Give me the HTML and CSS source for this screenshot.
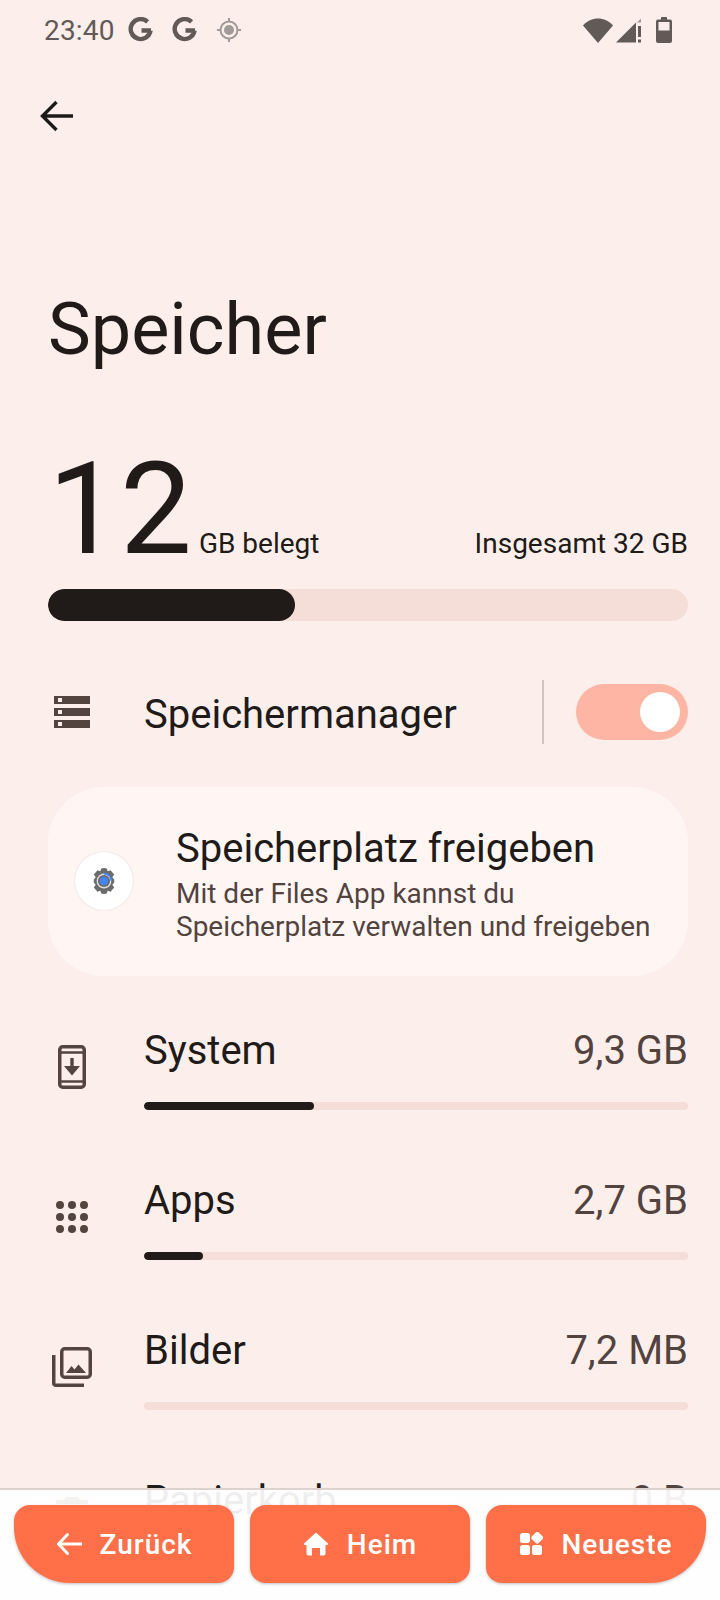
FILE: index.html
```html
<!DOCTYPE html>
<html lang="de">
<head>
    <meta charset="UTF-8">
    <title>Speicher</title>
    <link rel="stylesheet" href="styles.css">
</head>
<body>
    <div class="screen">
        <div class="statusbar">
            <span class="clock">23:40</span>
            <svg class="g-icon" viewBox="0 0 26 26"><path d="M23 13.5h-9.5M22.6 13.5a10 10 0 1 1-3-8.7" fill="none" stroke="#625a57" stroke-width="4.4"/></svg>
            <svg class="g-icon g-second" viewBox="0 0 26 26"><path d="M23 13.5h-9.5M22.6 13.5a10 10 0 1 1-3-8.7" fill="none" stroke="#625a57" stroke-width="4.4"/></svg>
            <svg class="gps-icon" viewBox="0 0 24 24">
                <circle cx="12" cy="12" r="8.5" fill="none" stroke="#a09a98" stroke-width="2"/>
                <circle cx="12" cy="12" r="5" fill="#a09a98"/>
                <path d="M12 0v4M12 20v4M0 12h4M20 12h4" stroke="#a09a98" stroke-width="2"/>
            </svg>
            <span class="status-right">
                <svg class="wifi-icon" viewBox="0 0 30 26"><path d="M0 8.5C8-.8 22-.8 30 8.500L15 26z" fill="#625a57"/></svg>
                <svg class="signal-icon" viewBox="0 0 26 26">
                    <path d="M0 25.500L20 5.500V25.500z" fill="#625a57"/>
                    <path d="M21 5.500L25 1.500V5.500z" fill="#a09a98"/>
                    <path d="M22 9h3v11h-3zM22 22.500h3v3h-3z" fill="#625a57"/>
                </svg>
                <svg class="battery-icon" viewBox="0 0 16 26">
                    <path d="M5 0h6v2.500h3a2 2 0 0 1 2 2V24a2 2 0 0 1-2 2H2a2 2 0 0 1-2-2V4.500a2 2 0 0 1 2-2h3z" fill="#625a57"/>
                    <rect x="2.500" y="5" width="11" height="8.500" fill="#fcefeb"/>
                </svg>
            </span>
        </div>

        <div class="toolbar">
            <svg class="back-icon" viewBox="0 0 34 32"><path d="M33 16H3M16.500 2L2.500 16l14 14" fill="none" stroke="#1c1a19" stroke-width="3.400"/></svg>
        </div>

        <h1 class="title">Speicher</h1>

        <div class="usage">
            <span class="usage-num">12</span>
            <span class="usage-unit">GB belegt</span>
            <span class="usage-total">Insgesamt 32 GB</span>
        </div>
        <div class="bar-main"><div class="bar-main-fill"></div></div>

        <div class="manager">
            <span class="row-icon">
                <svg class="icon-manager" viewBox="0 0 36 32">
                    <path fill-rule="evenodd" d="M0 0h36v8H0zM4 2v4h4V2zM0 12h36v8H0zM4 14v4h4v-4zM0 24h36v8H0zM4 26v4h4v-4z" fill="#54443f"/>
                </svg>
            </span>
            <span class="manager-label">Speichermanager</span>
            <span class="divider"></span>
            <span class="switch"><span class="switch-thumb"></span></span>
        </div>

        <div class="card">
            <span class="card-logo">
                <svg class="icon-files" viewBox="0 0 28 28">
                    <path d="M14 0l3 .5 1 3 3-1 4 4.500-2 3 2 2.500v3l-2 2.500 2 3-4 4.500-3-1-1 3-3 .5-3-.5-1-3-3 1-4-4.500 2-3-2-2.500v-3l2-2.500-2-3 4-4.500 3 1 1-3z" fill="#6c6c6c"/>
                    <circle cx="14" cy="14" r="8" fill="#dcdcdc"/>
                    <circle cx="14" cy="14" r="6.500" fill="#6c6c6c"/>
                    <circle cx="14" cy="14" r="4.500" fill="#4285f4"/>
                    <path d="M14 6a8 8 0 0 1 8 8" fill="none" stroke="#4285f4" stroke-width="1.800"/>
                </svg>
            </span>
            <div class="card-text">
                <div class="card-title">Speicherplatz freigeben</div>
                <div class="card-sub">Mit der Files App kannst du<br>Speicherplatz verwalten und freigeben</div>
            </div>
        </div>

        <div class="cats">
            <div class="cat">
                <span class="row-icon">
                    <svg class="icon-system" viewBox="0 0 28 44">
                        <rect x="1.750" y="1.750" width="24.500" height="40.500" rx="3" fill="none" stroke="#54443f" stroke-width="3.500"/>
                        <path d="M2 7.500h24M2 36.500h24" stroke="#54443f" stroke-width="2.500"/>
                        <path d="M12.300 13h3.400v8H22l-8 9.500-8-9.500h6.300z" fill="#54443f"/>
                    </svg>
                </span>
                <div class="cat-body">
                    <div class="cat-head"><span>System</span><span class="cat-size">9,3 GB</span></div>
                    <div class="cat-track"><div class="cat-fill fill-system"></div></div>
                </div>
            </div>
            <div class="cat">
                <span class="row-icon">
                    <svg class="icon-apps" viewBox="0 0 32 32" fill="#54443f">
                        <circle cx="4" cy="4" r="4"/><circle cx="16" cy="4" r="4"/><circle cx="28" cy="4" r="4"/>
                        <circle cx="4" cy="16" r="4"/><circle cx="16" cy="16" r="4"/><circle cx="28" cy="16" r="4"/>
                        <circle cx="4" cy="28" r="4"/><circle cx="16" cy="28" r="4"/><circle cx="28" cy="28" r="4"/>
                    </svg>
                </span>
                <div class="cat-body">
                    <div class="cat-head"><span>Apps</span><span class="cat-size">2,7 GB</span></div>
                    <div class="cat-track"><div class="cat-fill fill-apps"></div></div>
                </div>
            </div>
            <div class="cat">
                <span class="row-icon">
                    <svg class="icon-images" viewBox="0 0 40 40">
                        <rect x="9.750" y="1.750" width="28.500" height="28.500" rx="3" fill="none" stroke="#54443f" stroke-width="3.500"/>
                        <path d="M1.750 8v28a2.250 2.250 0 0 0 2.250 2.250h28" fill="none" stroke="#54443f" stroke-width="3.500"/>
                        <path d="M14 26l5.500-7 3 3.500 4-5L34 26z" fill="#54443f"/>
                    </svg>
                </span>
                <div class="cat-body">
                    <div class="cat-head"><span>Bilder</span><span class="cat-size">7,2 MB</span></div>
                    <div class="cat-track"></div>
                </div>
            </div>
            <div class="cat">
                <span class="row-icon">
                    <svg class="icon-trash" viewBox="0 0 32 40">
                        <path d="M10 0h12l2 3h8v4H0V3h8zM3 9h26v27a4 4 0 0 1-4 4H7a4 4 0 0 1-4-4z" fill="#54443f"/>
                    </svg>
                </span>
                <div class="cat-body">
                    <div class="cat-head"><span>Papierkorb</span><span class="cat-size">0 B</span></div>
                    <div class="cat-track"></div>
                </div>
            </div>
        </div>

        <!-- leiste liegt halbtransparent ueber der liste -->
        <div class="navbar">
            <button class="nav-btn nav-left" type="button">
                <svg class="nav-icon" viewBox="0 0 26 26"><path d="M25 13H3M11.500 3.500L2.500 13l9 9.500" fill="none" stroke="#fff" stroke-width="3" stroke-linecap="round" stroke-linejoin="round"/></svg>
                Zurück
            </button>
            <button class="nav-btn" type="button">
                <svg class="nav-icon" viewBox="0 0 26 26"><path d="M13 1.500L25 12.500c.4.5 0 1.500-.7 1.500H22.500v8.500a2 2 0 0 1-2 2H17v-7.500H9V24.500H5.500a2 2 0 0 1-2-2V14H1.700c-.7 0-1.100-1-.7-1.500z" fill="#fff"/></svg>
                Heim
            </button>
            <button class="nav-btn nav-right" type="button">
                <svg class="nav-icon icon-recent" viewBox="0 0 24 24" fill="#fff">
                    <rect x="1" y="1" width="10" height="10" rx="2.500"/>
                    <rect x="13.500" y="1" width="9.500" height="9.500" rx="2" transform="rotate(45 18.250 5.750)"/>
                    <rect x="1" y="13" width="10" height="10" rx="2.500"/>
                    <rect x="13" y="13" width="10" height="10" rx="2.500"/>
                </svg>
                Neueste
            </button>
        </div>
    </div>
</body>
</html>
```

FILE: styles.css
```css
* {
    box-sizing: border-box;
}
body {
    margin: 0;
    background-color: #fcefeb;
    font-family: Roboto, "Liberation Sans", sans-serif;
    color: #201a18;
}
svg {
    display: block;
    flex: none;
}
.screen {
    position: relative;
    width: 720px;
    height: 1600px;
    overflow: hidden;
    padding: 0 32px 0 48px;
}

/* statusleiste */
.statusbar {
    display: flex;
    align-items: center;
    height: 60px;
    margin-left: -4px;
    margin-right: 16px;
    color: #625a57;
}
.clock {
    font-size: 28px;
    width: 70px;
    letter-spacing: 0.2px;
}
.g-icon {
    width: 26px;
    height: 26px;
    margin-left: 14px;
}
.g-icon.g-second {
    margin-left: 18px;
}
.gps-icon {
    width: 24px;
    height: 24px;
    margin-left: 19px;
}
.status-right {
    display: flex;
    align-items: center;
    margin-left: auto;
}
.wifi-icon {
    width: 30px;
    height: 26px;
}
.signal-icon {
    width: 26px;
    height: 26px;
    margin-left: 3px;
}
.battery-icon {
    width: 16px;
    height: 26px;
    margin-left: 14px;
}

.toolbar {
    height: 56px;
    padding-top: 40px;
    margin-left: -8px;
}
.back-icon {
    width: 34px;
    height: 32px;
}

.title {
    margin: 172px 0 0;
    font-size: 72px;
    font-weight: 400;
    line-height: 84px;
}

/* belegter speicher */
.usage {
    display: flex;
    align-items: baseline;
    margin-top: 77px;
    height: 120px;
}
.usage-num {
    font-size: 128px;
    font-weight: 400;
    line-height: 120px;
}
.usage-unit {
    font-size: 28px;
    margin-left: 7px;
}
.usage-total {
    font-size: 28px;
    margin-left: auto;
}
.bar-main {
    height: 32px;
    margin-top: 20px;
    border-radius: 16px;
    background-color: #f5ded8;
    overflow: hidden;
}
.bar-main-fill {
    width: 247px;
    height: 100%;
    border-radius: 16px;
    background-color: #201a18;
}

.row-icon {
    display: flex;
    justify-content: center;
    align-items: center;
    width: 48px;
    margin-right: 48px;
    flex: none;
}

.manager {
    display: flex;
    align-items: center;
    height: 64px;
    margin-top: 59px;
}
.manager-label {
    font-size: 40px;
    padding-top: 4px;
}
.icon-manager {
    width: 36px;
    height: 32px;
}
.divider {
    width: 2px;
    height: 64px;
    margin-left: auto;
    margin-right: 32px;
    background-color: #d0c4c0;
}
.switch {
    display: flex;
    align-items: center;
    justify-content: flex-end;
    width: 112px;
    height: 56px;
    padding-right: 8px;
    border-radius: 28px;
    background-color: #ffb5a3;
}
.switch-thumb {
    width: 40px;
    height: 40px;
    border-radius: 50%;
    background-color: #fff;
}

/* hinweis-karte */
.card {
    display: flex;
    align-items: center;
    height: 189px;
    margin-top: 43px;
    padding-left: 27px;
    border-radius: 56px;
    background-color: #fff6f3;
}
.card-logo {
    display: flex;
    justify-content: center;
    align-items: center;
    width: 58px;
    height: 58px;
    margin-right: 43px;
    margin-bottom: 2px;
    border-radius: 50%;
    background-color: #fff;
    box-shadow: 0 0 2px rgba(0, 0, 0, 0.15);
}
.icon-files {
    width: 26px;
    height: 26px;
}
.card-text {
    padding-top: 5px;
}
.card-title {
    font-size: 40px;
    line-height: 46px;
}
.card-sub {
    font-size: 28px;
    line-height: 33px;
    color: #53433f;
    margin-top: 5px;
}

/* kategorien */
.cats {
    display: flex;
    flex-direction: column;
    margin-top: 17px;
}
.cat {
    display: flex;
    align-items: center;
    height: 150px;
}
.cat .row-icon {
    margin-bottom: 2px;
}
.cat-body {
    flex: 1;
}
.cat-head {
    display: flex;
    justify-content: space-between;
    margin-top: 1px;
    font-size: 40px;
    line-height: 46px;
}
.cat-size {
    color: #53433f;
}
.cat-track {
    height: 8px;
    margin-top: 28px;
    border-radius: 4px;
    background-color: #f5ded8;
    overflow: hidden;
}
.cat-fill {
    height: 100%;
    border-radius: 4px;
    background-color: #201a18;
}
.fill-system {
    width: 170px;
}
.fill-apps {
    width: 59px;
}
.icon-system {
    width: 28px;
    height: 44px;
}
.icon-apps {
    width: 32px;
    height: 32px;
}
.icon-images {
    width: 40px;
    height: 40px;
}
.icon-trash {
    width: 32px;
    height: 40px;
}

/* untere navigation */
.navbar {
    position: absolute;
    left: 0;
    right: 0;
    bottom: 0;
    display: flex;
    gap: 16px;
    height: 112px;
    padding: 15px 14px 0;
    border-top: 2px solid #dcd2cf;
    background-color: rgba(255, 255, 255, 0.93);
}
.nav-btn {
    display: flex;
    justify-content: center;
    align-items: center;
    gap: 18px;
    flex: 1;
    height: 78px;
    padding: 0;
    border: none;
    border-radius: 16px;
    background-color: #ff7049;
    box-shadow: 0 1px 3px rgba(0, 0, 0, 0.25);
    color: #fff;
    font-family: inherit;
    font-size: 28px;
    font-weight: 500;
    letter-spacing: 1px;
}
.nav-left {
    border-bottom-left-radius: 56px;
}
.nav-right {
    border-bottom-right-radius: 56px;
}
.nav-icon {
    width: 26px;
    height: 26px;
}
.nav-icon.icon-recent {
    width: 24px;
    height: 24px;
}
```
